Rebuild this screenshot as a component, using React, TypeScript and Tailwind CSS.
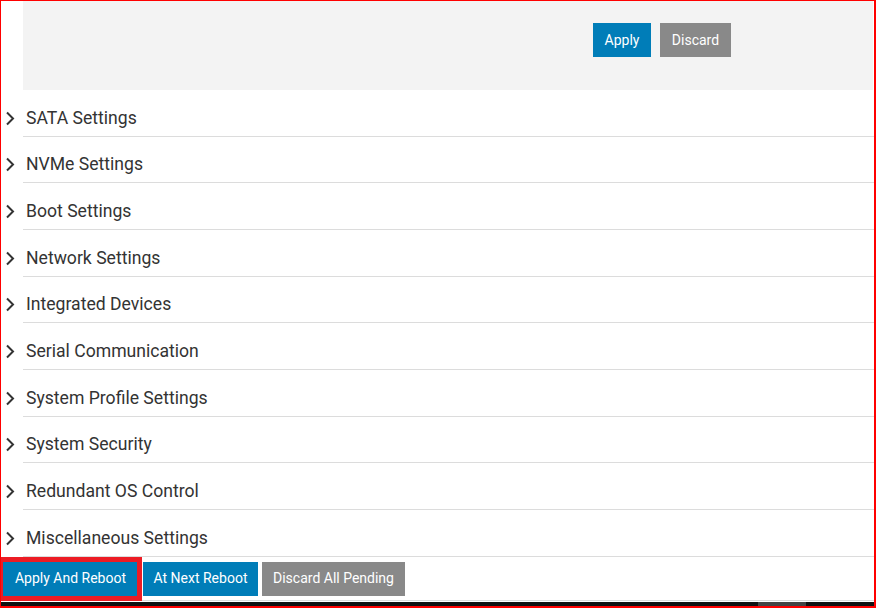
import React from "react";

const sections = [
  "SATA Settings",
  "NVMe Settings",
  "Boot Settings",
  "Network Settings",
  "Integrated Devices",
  "Serial Communication",
  "System Profile Settings",
  "System Security",
  "Redundant OS Control",
  "Miscellaneous Settings",
];

const Chevron = () => (
  <svg width="10" height="15" viewBox="0 0 10 15" fill="none" className="text-[#333]">
    <polyline points="2,1.5 8,7.5 2,13.5" stroke="currentColor" strokeWidth="2" />
  </svg>
);

const App = () => {
  return (
    <div
      className="relative w-[876px] h-[608px] overflow-hidden bg-white border-t border-l border-r-2 border-b-2 border-[#ff0000] flex flex-col"
      style={{ fontFamily: "Roboto, 'Liberation Sans', sans-serif" }}
    >
      {/* pending changes panel */}
      <div className="ml-[22px] mr-[1px] h-[89px] shrink-0 bg-[#f3f3f3] pl-[570px] pt-[22px] flex gap-[9px]">
        <button className="h-[34px] w-[58px] bg-[#007db8] text-white text-[14px]">Apply</button>
        <button className="h-[34px] w-[71px] bg-[#898989] text-white text-[14px]">Discard</button>
      </div>

      {/* collapsed sections */}
      <div className="flex flex-col">
        {sections.map((name) => (
          <div key={name} className="flex h-[46.67px] shrink-0">
            <div className="w-[22px] shrink-0 flex items-center pl-[4px] pt-[10px]">
              <Chevron />
            </div>
            <div className="flex-1 flex items-center border-b border-[#dcdcdc] pl-[3px] pt-[10px] text-[17.6px] text-[#333]">
              {name}
            </div>
          </div>
        ))}
      </div>

      {/* job buttons */}
      <div className="relative h-[44px] shrink-0 border-b border-[#dcdcdc] pt-[5px] pl-[1px] flex gap-[4px] items-start">
        <button className="h-[34px] w-[137px] bg-[#007db8] text-white text-[14px]">Apply And Reboot</button>
        <button className="h-[34px] w-[115px] bg-[#007db8] text-white text-[14px]">At Next Reboot</button>
        <button className="h-[34px] w-[143px] bg-[#898989] text-white text-[14px]">Discard All Pending</button>
        <div className="absolute left-[-3px] top-0 w-[144px] h-[44px] border-[5px] border-[#ec1c24]" />
      </div>

      {/* horizontal scrollbar */}
      <div className="h-[4px] shrink-0 bg-[#111] pl-[757px] mt-[1px]">
        <div className="h-full w-[48px] bg-[#444]" />
      </div>
    </div>
  );
};

export default App;
